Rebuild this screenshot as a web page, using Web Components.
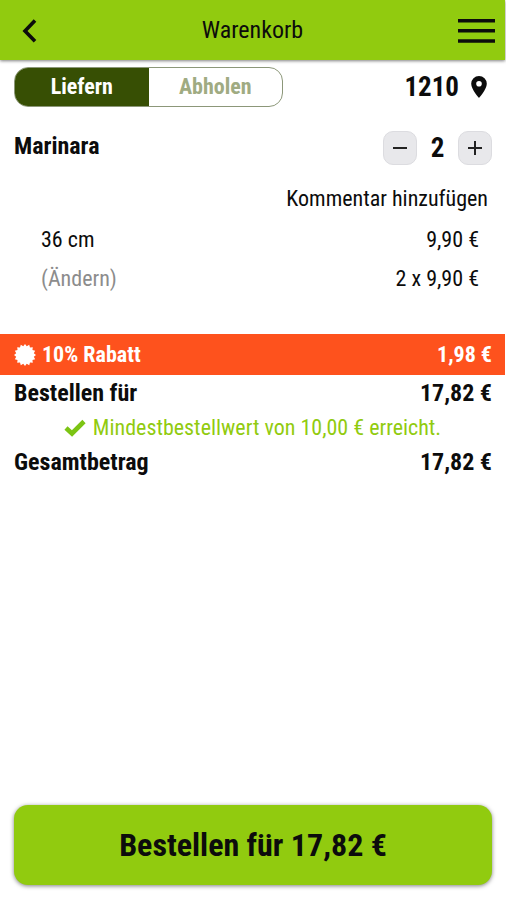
<!DOCTYPE html>
<html lang="de">
<head>
<meta charset="utf-8">
<meta name="viewport" content="width=device-width, initial-scale=1">
<title>Warenkorb</title>
<style>
html, body { margin: 0; }
body {
  --green: #91cb0f;
  --dark: #374f04;
  --orange: #fe521d;
  background: #fff;
  color: #0c0c0c;
  font-family: "Roboto Condensed", "Liberation Sans Narrow", Roboto, sans-serif;
}
</style>
</head>
<body>
<cart-page></cart-page>
<script>
const define = (name, html, setup) => customElements.define(name, class extends HTMLElement {
  constructor() {
    super();
    const t = document.createElement('template');
    t.innerHTML = `<style>
      *, :host { box-sizing: border-box; }
      button { font: inherit; color: inherit; background: none; border: 0; padding: 0; margin: 0; cursor: pointer; }
      svg { display: block; flex: none; }
    </style>` + html;
    this.attachShadow({ mode: 'open' }).append(t.content.cloneNode(true));
    if (setup) setup(this, this.shadowRoot);
  }
});

define('app-header', `
<style>
  :host { display: block; }
  header { display: grid; grid-template-columns: 1fr auto 1fr; align-items: center; height: 60px; padding: 0 10px;
    background: var(--green); box-shadow: 0 1px 3px rgba(0,0,0,.5); }
  h1 { margin: 0; font-size: 24px; font-weight: 400; line-height: 32px; }
  .menu { justify-self: end; }
  .back { justify-self: start; }
</style>
<header>
  <button class="back" aria-label="Zurück"><svg width="34" height="30" viewBox="0 0 34 30" fill="none" stroke="#0c0c0c" stroke-width="3.6"><path d="M25 5.500 15 16l10 10.200"/></svg></button>
  <h1><slot></slot></h1>
  <button class="menu" aria-label="Menü"><svg width="37" height="30" viewBox="0 0 37 30" fill="#0c0c0c"><path d="M0 4h37v3.400H0zM0 14h37v3.400H0zM0 24.300h37v3.400H0z"/></svg></button>
</header>`);

define('mode-switch', `
<style>
  :host { display: block; flex: 0 0 269px; }
  div { display: flex; height: 40px; border: 1px solid #8c9779; border-radius: 14px; overflow: hidden; }
  button { flex: 1; font-size: 22px; line-height: 38px; font-weight: 700; color: #a0ab82; }
  button[aria-pressed="true"] { background: var(--dark); color: #fff; }
</style>
<div role="group" aria-label="Bestellart">
  <button aria-pressed="true">Liefern</button><button aria-pressed="false">Abholen</button>
</div>`);

define('zip-button', `
<style>
  :host { display: block; }
  button { display: flex; align-items: center; gap: 12px; font-size: 27px; line-height: 32px; font-weight: 700; }
</style>
<button><slot></slot><svg width="16" height="22" viewBox="0 0 16 22" aria-hidden="true"><path fill="#0c0c0c" fill-rule="evenodd" d="M8 0a7.800 7.800 0 0 0-7.800 7.800C.2 13.300 8 22 8 22s7.800-8.700 7.800-14.200A7.800 7.800 0 0 0 8 0zm0 5a2.800 2.800 0 1 1 0 5.600A2.800 2.800 0 0 1 8 5z"/></svg></button>`);

define('quantity-stepper', `
<style>
  :host { display: flex; align-items: center; }
  button { display: grid; place-items: center; width: 34px; height: 34px; border: 1px solid #dcdce0; border-radius: 10px; background: #e8e8eb; }
  output { width: 41px; text-align: center; font-size: 27px; line-height: 34px; font-weight: 700; }
  path { fill: none; stroke: #222; stroke-width: 2; }
</style>
<button aria-label="Weniger"><svg width="16" height="16" viewBox="0 0 16 16"><path d="M1 8h14"/></svg></button>
<output><slot></slot></output>
<button aria-label="Mehr"><svg width="16" height="16" viewBox="0 0 16 16"><path d="M1 8h14M8 1v14"/></svg></button>`);

define('cart-item', `
<style>
  :host { display: block; padding: 23px 13px 0 14px; }
  .head, .line { display: flex; justify-content: space-between; }
  .head { align-items: center; }
  h2 { margin: 0; font-size: 24px; line-height: 32px; font-weight: 700; padding-bottom: 4px; }
  .comment { display: block; margin: 16px 4px 0 auto; font-size: 22px; line-height: 34px; }
  .line { padding: 0 13px 0 27px; font-size: 22px; line-height: 39px; }
  .lines { padding: 4px 0 36px; }
  .change { color: #8c8c8c; }
</style>
<div class="head"><h2><slot name="title"></slot></h2><quantity-stepper>2</quantity-stepper></div>
<button class="comment">Kommentar hinzufügen</button>
<div class="lines">
  <div class="line"><slot name="size"></slot><slot name="unit"></slot></div>
  <div class="line"><button class="change">(Ändern)</button><slot name="sum"></slot></div>
</div>`);

define('discount-bar', `
<style>
  :host { display: flex; align-items: center; height: 41px; padding: 0 13px 0 14px; background: var(--orange); color: #fff; font-size: 22px; line-height: 32px; font-weight: 700; }
  svg { margin-right: 6px; }
  .amount { margin-left: auto; }
</style>
<svg width="22" height="22" viewBox="-11 -11 22 22" aria-hidden="true"><polygon fill="#fff"/></svg>
<slot></slot><span class="amount"><slot name="amount"></slot></span>`, (host, root) => {
  const pts = [];
  for (let i = 0; i < 32; i++) {
    const r = i % 2 ? 9 : 11, a = i * Math.PI / 16;
    pts.push((r * Math.sin(a)).toFixed(2) + ',' + (-r * Math.cos(a)).toFixed(2));
  }
  root.querySelector('polygon').setAttribute('points', pts.join(' '));
});

define('total-row', `
<style>
  :host { display: flex; justify-content: space-between; padding: 0 13px 0 14px; font-size: 24px; line-height: 36px; font-weight: 700; }
</style>
<slot></slot><slot name="amount"></slot>`);

define('minimum-note', `
<style>
  :host { display: flex; align-items: center; justify-content: center; gap: 7px; color: var(--green); font-size: 22px; line-height: 33px; }
</style>
<svg width="22" height="18" viewBox="0 0 22 18" aria-hidden="true"><path d="M2 9 8 14.500 20 2.500" fill="none" stroke="#7cc414" stroke-width="4.600"/></svg><span><slot></slot></span>`);

define('order-button', `
<style>
  :host { display: block; margin: auto 13px 15px 14px; }
  button { display: block; width: 100%; height: 80px; border-radius: 14px; background: var(--green); box-shadow: 0 1px 4px rgba(0,0,0,.5); font-size: 32px; line-height: 40px; font-weight: 700; }
</style>
<button><slot></slot></button>`);

define('cart-page', `
<style>
  :host { display: flex; flex-direction: column; min-height: 100vh; padding-right: 1px; }
  .bar { display: flex; align-items: center; justify-content: space-between; padding: 7px 18px 0 14px; }
</style>
<app-header>Warenkorb</app-header>
<div class="bar"><mode-switch></mode-switch><zip-button>1210</zip-button></div>
<cart-item><span slot="title">Marinara</span><span slot="size">36 cm</span><span slot="unit">9,90 €</span><span slot="sum">2 x 9,90 €</span></cart-item>
<discount-bar>10% Rabatt<span slot="amount">1,98 €</span></discount-bar>
<total-row>Bestellen für<span slot="amount">17,82 €</span></total-row>
<minimum-note>Mindestbestellwert von 10,00 € erreicht.</minimum-note>
<total-row>Gesamtbetrag<span slot="amount">17,82 €</span></total-row>
<order-button>Bestellen für 17,82 €</order-button>`);
</script>
</body>
</html>
